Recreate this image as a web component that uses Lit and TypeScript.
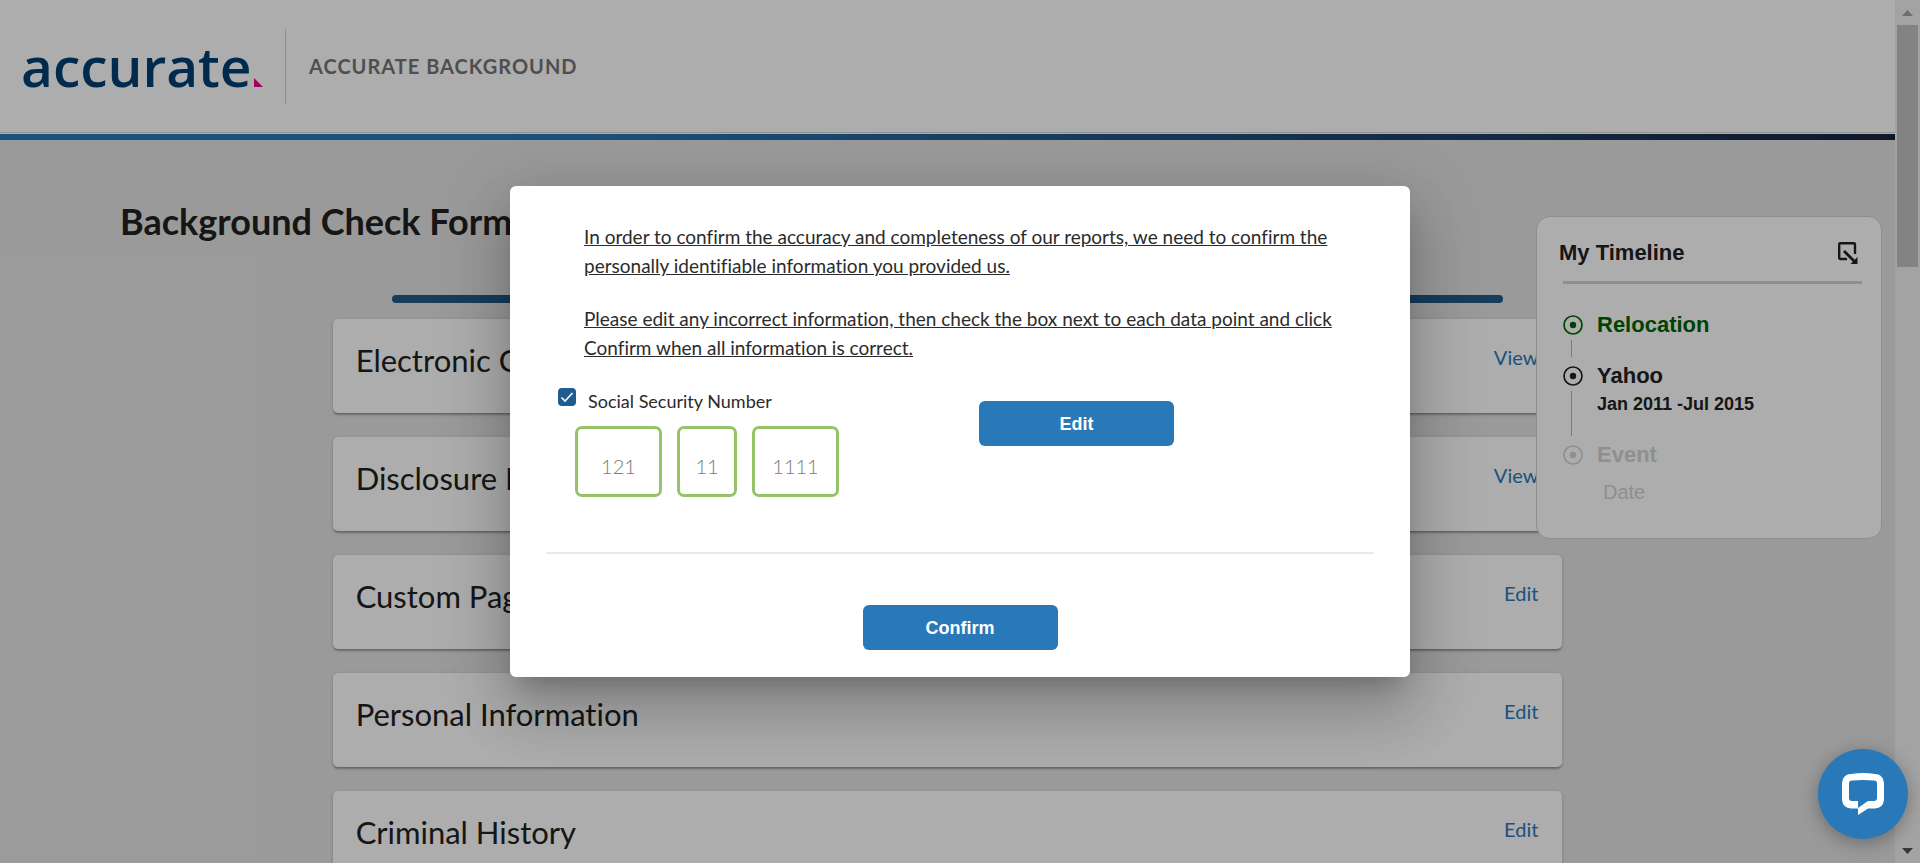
import { LitElement, html, css, svg } from "lit";
import { customElement, property, state } from "lit/decorators.js";

interface Section {
  title: string;
  action: string;
}

const SECTIONS: Section[] = [
  { title: "Electronic Consent", action: "View" },
  { title: "Disclosure Forms", action: "View" },
  { title: "Custom Page", action: "Edit" },
  { title: "Personal Information", action: "Edit" },
  { title: "Criminal History", action: "Edit" },
];

@customElement("site-header")
class SiteHeader extends LitElement {
  static styles = css`
    :host {
      display: block;
      background: #fff;
    }
    .bar {
      display: flex;
      align-items: center;
      height: 133px;
      padding: 0 23px;
      box-sizing: border-box;
      border-bottom: 1px solid #d8d8d8;
    }
    .logo {
      display: block;
      width: 240px;
      height: 50px;
      overflow: visible;
    }
    .word {
      font: 600 55px "Open Sans", sans-serif;
      fill: #003e73;
    }
    .client {
      margin-left: 22px;
      padding-left: 23px;
      border-left: 1px solid #d0d0d0;
      height: 75px;
      display: flex;
      align-items: center;
      font-size: 20px;
      font-weight: 700;
      letter-spacing: 1px;
      color: #757575;
    }
    .stripe {
      height: 6px;
      margin-top: 1px;
      background: linear-gradient(90deg, #2979b9 0%, #2979b9 30%, #17233f 100%);
    }
  `;
  render() {
    return html`
      <header>
        <div class="bar">
          <svg class="logo" viewBox="0 0 240 50" role="img" aria-label="accurate">
            <text class="word" x="-2" y="46">accurate</text>
            <path d="M231 37v9h9z" fill="#f0008c" />
          </svg>
          <div class="client">ACCURATE BACKGROUND</div>
        </div>
        <div class="stripe"></div>
      </header>
    `;
  }
}

@customElement("section-card")
class SectionCard extends LitElement {
  @property() heading = "";
  @property() action = "";
  static styles = css`
    :host {
      display: flex;
      justify-content: space-between;
      align-items: flex-start;
      padding: 22px 24px 34px 23px;
      background: #fff;
      border-radius: 5px;
      box-shadow: 0 3px 2px -1px rgba(0, 0, 0, 0.2), 0 1px 2px rgba(0, 0, 0, 0.14),
        0 1px 5px rgba(0, 0, 0, 0.12);
    }
    h2 {
      margin: 0;
      font-size: 31px;
      font-weight: 400;
      line-height: 38px;
      font-variant-ligatures: no-common-ligatures;
      color: #212121;
    }
    a {
      font-size: 20px;
      line-height: 32px;
      color: #2979b9;
      text-decoration: none;
    }
  `;
  render() {
    return html`<h2>${this.heading}</h2>
      <a href="#">${this.action}</a>`;
  }
}

@customElement("timeline-panel")
class TimelinePanel extends LitElement {
  static styles = css`
    :host {
      display: block;
      box-sizing: border-box;
      width: 346px;
      padding: 21px 19px 32px 22px;
      background: #fff;
      border: 1px solid #d3d3d3;
      border-radius: 14px;
      font-family: "Liberation Sans", Arial, sans-serif;
      color: #212121;
    }
    .top {
      display: flex;
      justify-content: space-between;
      align-items: center;
      height: 30px;
      padding-right: 4px;
    }
    h3 {
      margin: 0;
      font-size: 22px;
    }
    .shrink {
      border: 0;
      padding: 0;
      background: none;
      color: inherit;
      display: block;
    }
    .shrink svg,
    .dot {
      display: block;
    }
    .rule {
      height: 3px;
      margin: 13px 0 27px 4px;
      background: #d3d3d3;
    }
    ul {
      list-style: none;
      margin: 0;
      padding: 0 0 0 4px;
    }
    li {
      display: grid;
      grid-template-columns: 20px 1fr;
      column-gap: 14px;
    }
    .rail {
      display: flex;
      flex-direction: column;
      align-items: flex-start;
      padding-top: 4px;
    }
    .link {
      flex: 1;
      width: 1px;
      margin: 5px 0 5px 8px;
      background: #b5b5b5;
    }
    .short {
      height: 51px;
    }
    .long {
      height: 79px;
    }
    .name {
      font-size: 22px;
      line-height: 28px;
      font-weight: 700;
    }
    .when {
      font-size: 18px;
      line-height: 28px;
      font-weight: 700;
    }
    .done {
      color: #006400;
    }
    .pending {
      color: #d3d3d3;
    }
    .pending .when {
      padding: 9px 0 0 6px;
      font-size: 20px;
      font-weight: 400;
    }
  `;
  private dot() {
    return svg`<svg class="dot" width="20" height="20" viewBox="0 0 20 20" fill="none"
      stroke="currentColor"><circle cx="10" cy="10" r="9" stroke-width="1.7" />
      <circle cx="10" cy="10" r="3.2" fill="currentColor" stroke="none" /></svg>`;
  }
  render() {
    return html`
      <div class="top">
        <h3>My Timeline</h3>
        <button class="shrink" aria-label="Minimize timeline">
          <svg width="20" height="23" viewBox="0 0 20 23" fill="none" stroke="currentColor" stroke-width="2.4">
            <path d="M9 17H2.2Q1.200 17 1.200 15.8V2.2Q1.200 1.200 2.200 1.200H15.800Q17 1.200 17 2.200V12" />
            <path d="M6 9l10 10" stroke-width="2.800" />
            <path d="M19.500 15v7H12.500z" fill="currentColor" stroke="none" />
          </svg>
        </button>
      </div>
      <div class="rule"></div>
      <ul>
        <li class="done short">
          <div class="rail">${this.dot()}<span class="link"></span></div>
          <div class="name">Relocation</div>
        </li>
        <li class="long">
          <div class="rail">${this.dot()}<span class="link"></span></div>
          <div>
            <div class="name">Yahoo</div>
            <div class="when">Jan 2011 -Jul 2015</div>
          </div>
        </li>
        <li class="pending">
          <div class="rail">${this.dot()}</div>
          <div>
            <div class="name">Event</div>
            <div class="when">Date</div>
          </div>
        </li>
      </ul>
    `;
  }
}

@customElement("confirm-dialog")
class ConfirmDialog extends LitElement {
  @state() private checked = true;
  static styles = css`
    :host {
      display: block;
      box-sizing: border-box;
      width: 900px;
      padding: 36px;
      padding-bottom: 27px;
      background: #fff;
      border-radius: 6px;
      color: #2b2b2b;
      box-shadow: 0 16px 22px -10px rgba(0, 0, 0, 0.2), 0 36px 57px 4px rgba(0, 0, 0, 0.14),
        0 14px 69px 12px rgba(0, 0, 0, 0.12);
    }
    p {
      margin: 0 36px 24px 38px;
      font-size: 19px;
      line-height: 29px;
      font-variant-ligatures: no-common-ligatures;
      text-decoration: underline;
    }
    .row {
      display: grid;
      grid-template-columns: 433px 1fr;
      align-items: start;
      padding: 0 0 55px;
    }
    .check {
      display: flex;
      align-items: flex-start;
      gap: 12px;
      padding-left: 12px;
      font-size: 18px;
      line-height: 27px;
    }
    .check input {
      appearance: none;
      margin: 2px 0 0;
      width: 18px;
      height: 18px;
      border-radius: 4px;
      border: 2px solid #1f5c8f;
      background: #fff;
    }
    .check input:checked {
      background: #1f5c8f
        url("data:image/svg+xml,%3Csvg xmlns='http://www.w3.org/2000/svg' viewBox='0 0 14 14'%3E%3Cpath d='M1.500 7.500l3.500 3.500L12.500 3' fill='none' stroke='white' stroke-width='1.600'/%3E%3C/svg%3E")
        center / 14px 14px no-repeat;
    }
    .check label {
      padding-top: 2px;
    }
    .digits {
      display: flex;
      gap: 15px;
      margin-top: 11px;
      padding-left: 29px;
    }
    .digits input {
      box-sizing: border-box;
      width: 87px;
      height: 71px;
      padding: 8px 0 0;
      border: 3px solid #94c36a;
      border-radius: 7px;
      background: #fff;
      text-align: center;
      font: 300 20px Lato, sans-serif;
      color: #7c7c7c;
    }
    .digits .mid {
      width: 60px;
    }
    button {
      width: 195px;
      height: 45px;
      padding: 2px 0 0;
      border: 0;
      border-radius: 6px;
      background: #2979b9;
      color: #fff;
      font: 700 18px "Liberation Sans", Arial, sans-serif;
    }
    .edit {
      margin: 15px 0 0;
    }
    .footer {
      display: flex;
      justify-content: center;
      padding-top: 51px;
      border-top: 2px solid #e9e9e9;
    }
  `;
  render() {
    return html`
      <p>
        In order to confirm the accuracy and completeness of our reports, we need to confirm the
        personally identifiable information you provided us.
      </p>
      <p>
        Please edit any incorrect information, then check the box next to each data point and click
        Confirm when all information is correct.
      </p>
      <div class="row">
        <div>
          <div class="check">
            <input
              id="ssn-ok"
              type="checkbox"
              .checked=${this.checked}
              @change=${() => (this.checked = !this.checked)}
            />
            <label for="ssn-ok">Social Security Number</label>
          </div>
          <div class="digits">
            <input aria-label="First three digits" value="121" readonly />
            <input class="mid" aria-label="Middle two digits" value="11" readonly />
            <input aria-label="Last four digits" value="1111" readonly />
          </div>
        </div>
        <button class="edit">Edit</button>
      </div>
      <div class="footer"><button>Confirm</button></div>
    `;
  }
}

@customElement("app-root")
class AppRoot extends LitElement {
  static styles = css`
    :host {
      display: flex;
      height: 100vh;
      overflow: hidden;
      position: relative;
      font-family: Lato, sans-serif;
      color: #212121;
    }
    .page {
      flex: 1;
      min-width: 0;
      overflow: hidden;
      position: relative;
      background: #e4e4e4;
    }
    h1 {
      margin: 0;
      padding: 59px 120px 0;
      font-size: 36px;
      line-height: 44px;
      font-weight: 700;
    }
    .list {
      display: flex;
      flex-direction: column;
      gap: 24px;
      width: calc(65% - 2px);
      margin: 52px auto 0;
    }
    .progress {
      height: 8px;
      margin: 0 59px -8px;
      border-radius: 4px;
      background: #235b87;
    }
    .timeline {
      position: absolute;
      top: 216px;
      right: 13px;
    }
    .scroll {
      width: 25px;
      display: flex;
      flex-direction: column;
      align-items: center;
      background: #f1f1f1;
    }
    .arrow {
      display: block;
      width: 11px;
      height: 6px;
      margin: 10px 0 9px;
    }
    .thumb {
      width: 21px;
      height: 28%;
      background: #c1c1c1;
      margin-bottom: auto;
    }
    .overlay {
      position: absolute;
      inset: 0;
      display: flex;
      align-items: center;
      justify-content: center;
      background: rgba(0, 0, 0, 0.32);
    }
    .chat {
      position: absolute;
      right: 12px;
      bottom: 24px;
      width: 90px;
      height: 90px;
      padding: 0;
      border: 0;
      border-radius: 50%;
      display: grid;
      place-items: center;
      background: #2979b9;
      box-shadow: 0 4px 18px rgba(0, 0, 0, 0.3);
    }
  `;
  render() {
    return html`
      <div class="page">
        <site-header></site-header>
        <h1>Background Check Form</h1>
        <div class="list">
          <div class="progress"></div>
          ${SECTIONS.map(
            (s) => html`<section-card .heading=${s.title} .action=${s.action}></section-card>`
          )}
        </div>
        <timeline-panel class="timeline"></timeline-panel>
      </div>
      <div class="scroll" aria-hidden="true">
        <svg class="arrow" viewBox="0 0 11 6"><path d="M5.500 0L11 6H0z" fill="#a3a3a3" /></svg>
        <div class="thumb"></div>
        <svg class="arrow" viewBox="0 0 11 6"><path d="M0 0h11L5.500 6z" fill="#505050" /></svg>
      </div>
      <div class="overlay"><confirm-dialog role="dialog" aria-modal="true"></confirm-dialog></div>
      <button class="chat" aria-label="Open chat">
        <svg width="42" height="42" viewBox="0 0 42 42">
          <path
            fill="#fff"
            fill-rule="evenodd"
            d="M9 1Q21-1 33 1Q41 1 42 10Q43 18 42 27Q41 35 33 35.500H26L16 42V35.500H9Q1 35 0 27Q-1 18 0 10Q1 1 9 1zM10 7.500Q7 7.500 7 10.500V25Q7 28 10 28H16V35L26 28H32Q35 28 35 25V10.500Q35 7.500 32 7.500Q21 6.500 10 7.500z"
          />
        </svg>
      </button>
    `;
  }
}
